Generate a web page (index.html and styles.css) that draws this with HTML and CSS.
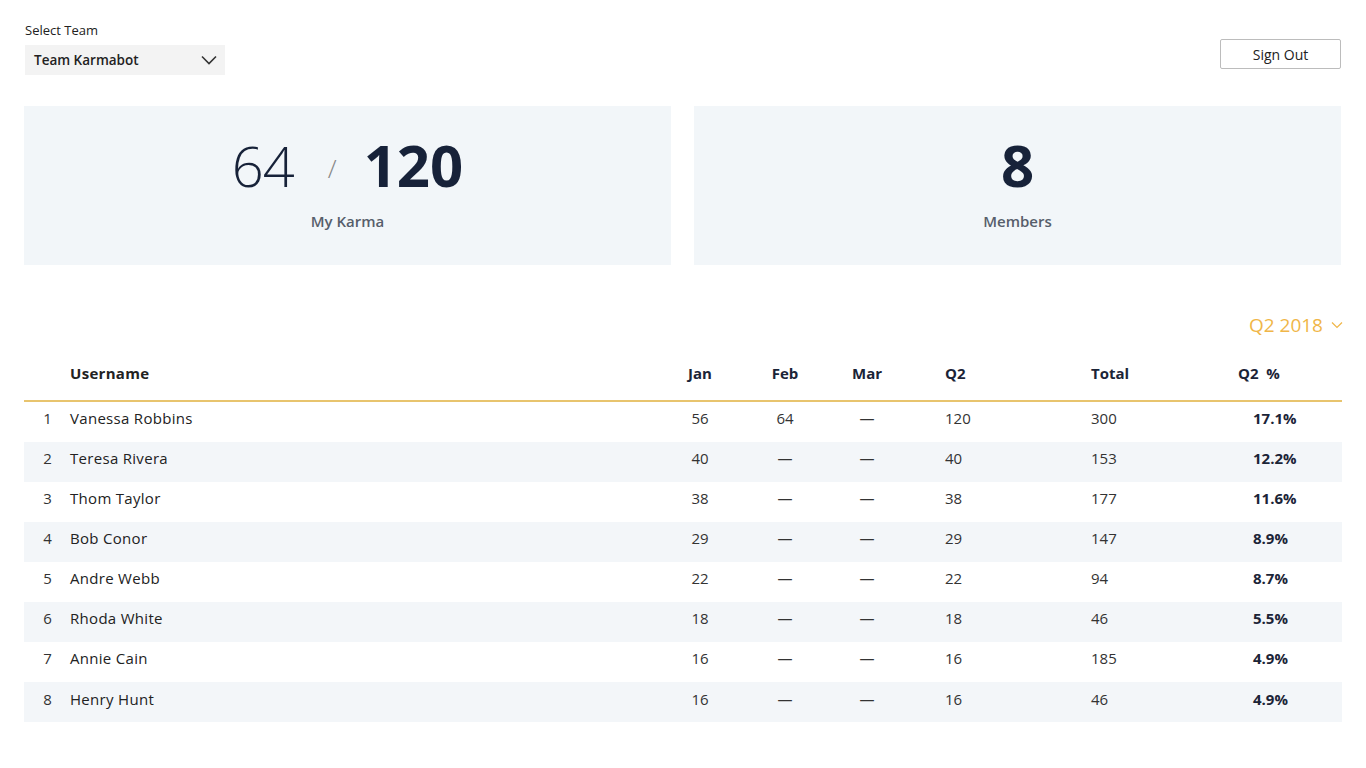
FILE: index.html
```html
<!DOCTYPE html>
<html>
<head>
<meta charset="utf-8">
<link rel="stylesheet" href="styles.css">
</head>
<body>
<div class="page">
  <header class="topbar">
    <div class="team">
      <div class="team-label">Select Team</div>
      <div class="select">
        <span>Team Karmabot</span>
        <svg class="chev" width="16" height="10" viewBox="0 0 16 10"><path d="M1 1.5 L8 8.5 L15 1.5" fill="none" stroke="#333" stroke-width="1.6"/></svg>
      </div>
    </div>
    <button class="signout">Sign Out</button>
  </header>

  <section class="cards">
    <div class="card">
      <div class="big">
        <span class="light">64</span>
        <span class="slash">/</span>
        <span class="bold">120</span>
      </div>
      <div class="caption">My Karma</div>
    </div>
    <div class="card">
      <div class="big"><span class="bold">8</span></div>
      <div class="caption">Members</div>
    </div>
  </section>

  <div class="period">
    <span>Q2 2018</span>
    <svg width="12" height="8" viewBox="0 0 12 8"><path d="M1 1.5 L6 6.5 L11 1.5" fill="none" stroke="#f0b648" stroke-width="1.2"/></svg>
  </div>

  <div class="table">
    <div class="row head">
      <div class="c-rank"></div>
      <div class="c-user">Username</div>
      <div class="c-mid">Jan</div>
      <div class="c-mid">Feb</div>
      <div class="c-mid">Mar</div>
      <div class="c-q2">Q2</div>
      <div class="c-total">Total</div>
      <div class="c-pct">Q2&nbsp; %</div>
    </div>
    <div class="row">
      <div class="c-rank">1</div><div class="c-user">Vanessa Robbins</div>
      <div class="c-mid">56</div><div class="c-mid">64</div><div class="c-mid">—</div>
      <div class="c-q2">120</div><div class="c-total">300</div><div class="c-pct">17.1%</div>
    </div>
    <div class="row">
      <div class="c-rank">2</div><div class="c-user">Teresa Rivera</div>
      <div class="c-mid">40</div><div class="c-mid">—</div><div class="c-mid">—</div>
      <div class="c-q2">40</div><div class="c-total">153</div><div class="c-pct">12.2%</div>
    </div>
    <div class="row">
      <div class="c-rank">3</div><div class="c-user">Thom Taylor</div>
      <div class="c-mid">38</div><div class="c-mid">—</div><div class="c-mid">—</div>
      <div class="c-q2">38</div><div class="c-total">177</div><div class="c-pct">11.6%</div>
    </div>
    <div class="row">
      <div class="c-rank">4</div><div class="c-user">Bob Conor</div>
      <div class="c-mid">29</div><div class="c-mid">—</div><div class="c-mid">—</div>
      <div class="c-q2">29</div><div class="c-total">147</div><div class="c-pct">8.9%</div>
    </div>
    <div class="row">
      <div class="c-rank">5</div><div class="c-user">Andre Webb</div>
      <div class="c-mid">22</div><div class="c-mid">—</div><div class="c-mid">—</div>
      <div class="c-q2">22</div><div class="c-total">94</div><div class="c-pct">8.7%</div>
    </div>
    <div class="row">
      <div class="c-rank">6</div><div class="c-user">Rhoda White</div>
      <div class="c-mid">18</div><div class="c-mid">—</div><div class="c-mid">—</div>
      <div class="c-q2">18</div><div class="c-total">46</div><div class="c-pct">5.5%</div>
    </div>
    <div class="row">
      <div class="c-rank">7</div><div class="c-user">Annie Cain</div>
      <div class="c-mid">16</div><div class="c-mid">—</div><div class="c-mid">—</div>
      <div class="c-q2">16</div><div class="c-total">185</div><div class="c-pct">4.9%</div>
    </div>
    <div class="row last">
      <div class="c-rank">8</div><div class="c-user">Henry Hunt</div>
      <div class="c-mid">16</div><div class="c-mid">—</div><div class="c-mid">—</div>
      <div class="c-q2">16</div><div class="c-total">46</div><div class="c-pct">4.9%</div>
    </div>
  </div>
</div>
</body>
</html>
```

FILE: styles.css
```css
* { box-sizing: border-box; }
html, body { margin: 0; padding: 0; background: #fff; }
body {
  font-family: "Open Sans", "Noto Sans", sans-serif;
  color: #1b2437;
}
.page {
  padding: 20px 24px 0 24px;
  width: 1366px;
}
.topbar {
  display: flex;
  justify-content: space-between;
  align-items: flex-start;
  height: 86px;
}
.team { padding-left: 1px; }
.team-label {
  font-size: 13px;
  line-height: 20px;
  color: #222;
  margin-bottom: 5px;
}
.select {
  width: 200px;
  height: 30px;
  background: #f3f3f3;
  display: flex;
  align-items: center;
  justify-content: space-between;
  padding: 0 8px 0 9px;
  font-size: 13.5px;
  font-weight: 600;
  color: #222;
}
.chev { display: block; }
.signout {
  margin-top: 19px;
  margin-right: 1px;
  width: 121px;
  height: 30px;
  background: #fff;
  border: 1px solid #bcbcbc;
  border-radius: 2px;
  font-family: inherit;
  font-size: 14px;
  color: #222;
  padding: 0;
}
.cards {
  display: grid;
  grid-template-columns: 647px 647px;
  column-gap: 23px;
}
.card {
  background: #f2f6f9;
  height: 159px;
  display: flex;
  flex-direction: column;
  align-items: center;
  padding-top: 26px;
}
.big {
  display: flex;
  align-items: baseline;
  height: 66px;
  line-height: 66px;
  color: #172239;
}
.big .light { font-size: 56px; font-weight: 300; letter-spacing: -1px; }
.big .slash {
  font-size: 26px;
  font-weight: 300;
  color: #888;
  margin: 0 27px 0 34px;
  align-self: center;
  line-height: 30px;
  margin-top: 6px;
}
.big .bold { font-size: 58px; font-weight: 700; }
.caption {
  margin-top: 13px;
  font-size: 15px;
  font-weight: 600;
  color: #575e6b;
}
.period {
  margin-top: 48px;
  display: flex;
  justify-content: flex-end;
  align-items: center;
  gap: 8px;
  color: #f0b648;
  font-size: 19px;
  height: 24px;
  margin-right: -1px;
}
.table {
  margin-top: 15px;
  width: 1318px;
}
.row {
  display: grid;
  grid-template-columns: 46px 590px 80px 90px 74px 187px 109px 126px 16px;
  align-items: center;
  height: 40px;
  font-size: 15px;
  color: #333;
  padding-bottom: 9px;
}
.row:nth-child(odd):not(.head) { background: #f3f6f9; }
.row.head {
  height: 50px;
  border-bottom: 2px solid #e8c46e;
  font-weight: 700;
  color: #1b2437;
  padding-bottom: 7px;
}
.row.last { height: 40px; padding-bottom: 6px; }
.c-rank { text-align: center; padding-left: 1px; }
.c-user { color: #222; letter-spacing: 0.3px; }
.c-mid { text-align: center; }
.c-q2 { padding-left: 41px; }
.c-total { text-align: left; }
.c-pct { text-align: left; padding-left: 53px; }
.row.head .c-pct { padding-left: 38px; }
.row:not(.head) .c-pct { font-weight: 700; color: #1b2437; }
```
